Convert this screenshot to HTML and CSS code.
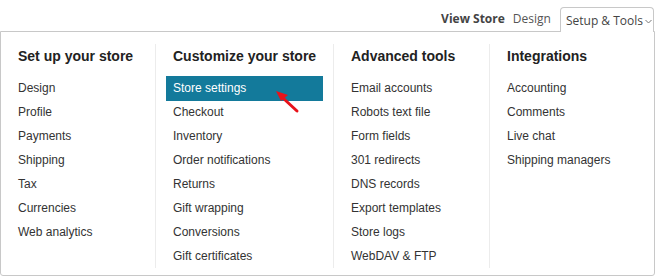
FILE: index.html
```html
<!DOCTYPE html>
<html lang="en">
<head>
    <meta charset="UTF-8">
    <title>Setup &amp; Tools</title>
    <link rel="stylesheet" href="styles.css">
</head>
<body>
    <div class="topbar">
        <a class="top-link strong" href="#">View Store</a>
        <a class="top-link" href="#">Design</a>
        <a class="top-link tab" href="#">Setup &amp; Tools
            <svg class="chevron" width="7" height="5" viewBox="0 0 7 5"><path d="M0.5 1 L3.5 4 L6.5 1" fill="none" stroke="#777" stroke-width="1"/></svg>
        </a>
    </div>

    <div class="panel">
        <div class="col col-a">
            <h3>Set up your store</h3>
            <a class="item" href="#">Design</a>
            <a class="item" href="#">Profile</a>
            <a class="item" href="#">Payments</a>
            <a class="item" href="#">Shipping</a>
            <a class="item" href="#">Tax</a>
            <a class="item" href="#">Currencies</a>
            <a class="item" href="#">Web analytics</a>
        </div>
        <div class="col col-b">
            <h3>Customize your store</h3>
            <a class="item active" href="#">Store settings</a>
            <a class="item" href="#">Checkout</a>
            <a class="item" href="#">Inventory</a>
            <a class="item" href="#">Order notifications</a>
            <a class="item" href="#">Returns</a>
            <a class="item" href="#">Gift wrapping</a>
            <a class="item" href="#">Conversions</a>
            <a class="item" href="#">Gift certificates</a>
        </div>
        <div class="col col-c">
            <h3>Advanced tools</h3>
            <a class="item" href="#">Email accounts</a>
            <a class="item" href="#">Robots text file</a>
            <a class="item" href="#">Form fields</a>
            <a class="item" href="#">301 redirects</a>
            <a class="item" href="#">DNS records</a>
            <a class="item" href="#">Export templates</a>
            <a class="item" href="#">Store logs</a>
            <a class="item" href="#">WebDAV &amp; FTP</a>
        </div>
        <div class="col col-d">
            <h3>Integrations</h3>
            <a class="item" href="#">Accounting</a>
            <a class="item" href="#">Comments</a>
            <a class="item" href="#">Live chat</a>
            <a class="item" href="#">Shipping managers</a>
        </div>

        <!-- flecha de destaque -->
        <svg class="arrow" width="30" height="30" viewBox="0 0 30 30">
            <path d="M26 27 L13 15" stroke="#e8121a" stroke-width="3" stroke-linecap="round"/>
            <path d="M5 7 L17 11 L10 17 Z" fill="#e8121a"/>
        </svg>
    </div>
</body>
</html>
```

FILE: styles.css
```css
body {
    margin: 0;
    background: #ffffff;
    font-family: "Liberation Sans", Arial, sans-serif;
}

a {
    text-decoration: none;
}

.topbar {
    display: flex;
    justify-content: flex-end;
    align-items: flex-end;
    height: 31px;
    padding-right: 1px;
    position: relative;
    z-index: 2;
}

.top-link {
    font-family: "Open Sans", sans-serif;
    font-size: 12px;
    color: #555;
    padding: 0 4px 4px;
    line-height: 16px;
}

.top-link.strong {
    font-weight: bold;
    color: #444;
}

.tab {
    display: flex;
    align-items: center;
    gap: 2px;
    padding: 1px 1px 0 5px;
    margin-left: 5px;
    margin-bottom: -1px;
    box-sizing: border-box;
    background: #fff;
    border: 1px solid #c8c8c8;
    border-bottom: none;
    border-radius: 4px 4px 0 0;
    height: 25px;
    color: #444;
}

.chevron {
    margin-top: 2px;
}

.panel {
    position: relative;
    display: grid;
    grid-template-columns: 155px 178px 156px 1fr;
    height: 245px;
    box-sizing: border-box;
    padding-top: 12px;
    border: 1px solid #c8c8c8;
    border-radius: 0 0 3px 3px;
}

.col {
    display: flex;
    flex-direction: column;
    height: 224px;
    padding: 0 10px;
    border-right: 1px solid #ececec;
}

.col-d {
    border-right: none;
}

.col h3 {
    margin: 0 0 8px;
    padding-left: 7px;
    font-size: 14px;
    line-height: 24px;
    font-weight: bold;
    color: #222;
}

.item {
    display: block;
    padding-left: 7px;
    font-size: 12px;
    line-height: 24px;
    color: #333;
}

.item.active {
    background: #137a9b;
    color: #fff;
    line-height: 25px;
    margin-bottom: -1px;
}

.arrow {
    position: absolute;
    left: 270px;
    top: 52px;
}
```
